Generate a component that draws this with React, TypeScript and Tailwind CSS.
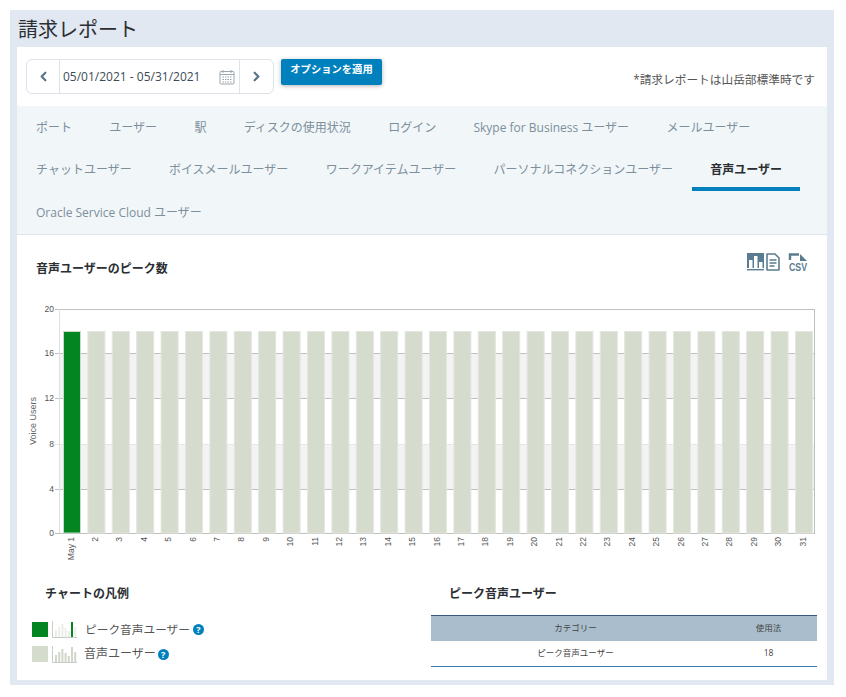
import React from "react";
import { ChevronLeft, ChevronRight } from "lucide-react";

const fontStack = "font-['Open_Sans','Noto_Sans_CJK_JP',sans-serif]";

const tabs = [
  "ポート",
  "ユーザー",
  "駅",
  "ディスクの使用状況",
  "ログイン",
  "Skype for Business ユーザー",
  "メールユーザー",
  "チャットユーザー",
  "ボイスメールユーザー",
  "ワークアイテムユーザー",
  "パーソナルコネクションユーザー",
  "音声ユーザー",
  "Oracle Service Cloud ユーザー",
];

const days = Array.from({ length: 31 }, (_, i) => (i === 0 ? "May 1" : String(i + 1)));

function UsageChart() {
  const left = 42;
  const right = 798;
  const top = 19;
  const bottom = 243;
  const ticks = [
    { label: "20", y: 19 },
    { label: "16", y: 63 },
    { label: "12", y: 108 },
    { label: "8", y: 154 },
    { label: "4", y: 199 },
    { label: "0", y: 243 },
  ];
  return (
    <svg width="810" height="285" className="mt-[13px] block" fontFamily="'Liberation Sans', sans-serif">
      <rect x={left} y={63} width={right - left} height={45} fill="#f3f3f4" />
      <rect x={left} y={154} width={right - left} height={45} fill="#f3f3f4" />
      {ticks.map((t) => (
        <g key={t.label}>
          <line
            x1={left - 4}
            x2={right}
            y1={t.y + 0.5}
            y2={t.y + 0.5}
            stroke={t.label === "8" ? "#e6e6e6" : "#c0c0c0"}
          />
          <text x={left - 5} y={t.y + 3} textAnchor="end" fontSize="8.5" fill="#555">
            {t.label}
          </text>
        </g>
      ))}
      <line x1={left + 0.5} x2={left + 0.5} y1={top} y2={bottom} stroke="#e0e0e0" />
      <line x1={right - 0.5} x2={right - 0.5} y1={top} y2={bottom} stroke="#c0c0c0" />
      {days.map((d, i) => {
        const x = 46 + i * 24.4;
        return (
          <g key={d}>
            <rect
              x={x + 0.5}
              y={41.5}
              width={17}
              height={bottom - 41.5}
              fill={i === 0 ? "#038522" : "#d5dbcd"}
              stroke={i === 0 ? "#c4dcc8" : "#e3e7de"}
            />
            <text
              transform={`translate(${x + 10.5} 247) rotate(-90)`}
              textAnchor="end"
              fontSize="8.5"
              fill="#555"
            >
              {d}
            </text>
          </g>
        );
      })}
      <text transform="translate(19 131) rotate(-90)" textAnchor="middle" fontSize="9" fill="#666">
        Voice Users
      </text>
    </svg>
  );
}

function ReportIcons() {
  return (
    <svg width="68" height="20" viewBox="0 0 68 20" className="block" fill="#5a7c91">
      <rect x="0" y="0" width="17" height="15" />
      <rect x="2" y="7" width="3.5" height="8" fill="#fff" />
      <rect x="7" y="3" width="3.5" height="12" fill="#fff" />
      <rect x="12" y="9" width="3.5" height="6" fill="#fff" />
      <rect x="0" y="16" width="17" height="1.4" />
      <path
        d="M20 1h8l4 4v12h-12z"
        fill="none"
        stroke="#5a7c91"
        strokeWidth="1.6"
        strokeLinejoin="round"
      />
      <path d="M22.5 7h7M22.5 10h7M22.5 13h5" stroke="#5a7c91" strokeWidth="1.5" />
      <path d="M43 7V1.5h9" fill="none" stroke="#5a7c91" strokeWidth="2.4" />
      <path d="M53 1l7 7h-7z" />
      <text
        x="42"
        y="18"
        fontSize="11.5"
        fontWeight="700"
        fontFamily="'Liberation Sans', sans-serif"
        textLength="18"
        lengthAdjust="spacingAndGlyphs"
      >
        CSV
      </text>
    </svg>
  );
}

function MiniBars({ peak }: { peak: boolean }) {
  const heights = [7, 10, 13, 9, 6, 15, 10];
  return (
    <svg width="25" height="17" className="block">
      <path d="M0.5 0V16.5H25" fill="none" stroke="#c9cdc9" />
      {heights.map((h, i) => (
        <rect
          key={i}
          x={3 + i * 3.2}
          y={16 - h}
          width="2"
          height={h}
          fill={peak ? (i === 5 ? "#038522" : "#eceee9") : "#d0d6c8"}
        />
      ))}
    </svg>
  );
}

function HelpDot() {
  return (
    <span className="flex h-[11px] w-[11px] items-center justify-center rounded-full bg-[#0080bd] text-[9px] font-bold leading-none text-white">
      ?
    </span>
  );
}

export default function App() {
  return (
    <div className={`${fontStack} bg-white pb-[12px] pl-[10px] pr-[12px] pt-[10px] text-[#333]`}>
      <div className="bg-[#e1e8f1] px-[7px] pb-[5px]">
        <div className="flex h-[37px] items-center pl-px pt-[2px] text-[20px] leading-none text-[#2b2f33]">
          請求レポート
        </div>
        <div className="bg-white">
          <div className="flex h-[59px] pl-[9px] pr-[12px] pt-[12px]">
            <div className="flex h-[35px] w-[248px] rounded-md border border-[#dde3e8] text-[#5a7488]">
              <div className="flex w-[33px] items-center justify-center border-r border-[#dde3e8]">
                <ChevronLeft size={15} strokeWidth={3.5} />
              </div>
              <div className="flex flex-1 items-center border-r border-[#dde3e8] pl-[3px] pr-[4px] pt-px">
                <span className="flex-1 text-[12px] text-[#3c4a55]">05/01/2021 - 05/31/2021</span>
                <svg width="16" height="16" viewBox="0 0 16 16" fill="none" stroke="#9aa7b0">
                  <rect x="1" y="2.5" width="14" height="12.5" rx="1" />
                  <path d="M1 5.5h14M4 1v3M12 1v3" />
                  <path d="M3.5 8h9M3.5 10.5h9M3.5 13h9" strokeDasharray="1.5 1" />
                </svg>
              </div>
              <div className="flex w-[33px] items-center justify-center">
                <ChevronRight size={15} strokeWidth={3.5} />
              </div>
            </div>
            <button className="ml-[7px] h-[26px] w-[101px] rounded-[2px] bg-[#0080bd] pb-[4px] text-[10.3px] font-bold text-white shadow-[0_1px_4px_rgba(0,0,0,0.3)]">
              オプションを適用
            </button>
            <div className="ml-auto self-end pb-[20px] text-[11.7px] leading-none text-[#555]">
              *請求レポートは山岳部標準時です
            </div>
          </div>
          <div className="flex flex-wrap gap-x-[1.3px] border-b border-[#dde3e8] bg-[#f1f6f9] pl-px">
            {tabs.map((t) => {
              const active = t === "音声ユーザー";
              return (
                <div
                  key={t}
                  className={
                    active
                      ? "flex h-[42.67px] items-center border-b-4 border-[#0080bd] px-[18px] pt-[5px] text-[12px] font-semibold text-[#2b2f33]"
                      : "flex h-[42.67px] items-center border-b-4 border-transparent px-[18px] pt-[5px] text-[12px] text-[#7d8f9b]"
                  }
                >
                  {t}
                </div>
              );
            })}
          </div>
          <div className="flex items-start justify-between pl-[19px] pr-[12px] pt-[18px]">
            <div className="pt-[8px] text-[12px] font-bold leading-[16px] text-[#2b2f33]">
              音声ユーザーのピーク数
            </div>
            <ReportIcons />
          </div>
          <UsageChart />
          <div className="flex pb-[13px] pr-[10px] pt-[11px]">
            <div className="w-[414px] pl-[15px]">
              <div className="pl-[13px] text-[12px] font-bold leading-[16px] text-[#2b2f33]">
                チャートの凡例
              </div>
              <div className="mt-[19px] flex h-[17px] items-center">
                <div className="h-[15px] w-[16px] bg-[#038522]" />
                <div className="ml-[4px] mr-[8px]">
                  <MiniBars peak />
                </div>
                <span className="mr-[3px] text-[11.7px] text-[#555]">ピーク音声ユーザー</span>
                <HelpDot />
              </div>
              <div className="mt-[8px] flex h-[17px] items-center">
                <div className="h-[16px] w-[16px] bg-[#d5dbcd]" />
                <div className="ml-[4px] mr-[7px]">
                  <MiniBars peak={false} />
                </div>
                <span className="mr-[2px] text-[12px] text-[#555]">音声ユーザー</span>
                <HelpDot />
              </div>
            </div>
            <div className="flex-1">
              <div className="pl-[18px] text-[12px] font-bold leading-[16px] text-[#2b2f33]">
                ピーク音声ユーザー
              </div>
              <table className="mt-[13px] w-full text-center text-[8.5px] text-[#444]">
                <thead>
                  <tr className="h-[26px] border-t border-[#3a5a7d] bg-[#a9bdcd]">
                    <th className="font-normal">カテゴリー</th>
                    <th className="w-[97px] font-normal">使用法</th>
                  </tr>
                </thead>
                <tbody>
                  <tr className="h-[25px]">
                    <td className="border-b border-[#3a7ab5]">ピーク音声ユーザー</td>
                    <td className="border-b border-[#3a7ab5]">18</td>
                  </tr>
                </tbody>
              </table>
            </div>
          </div>
        </div>
      </div>
    </div>
  );
}
